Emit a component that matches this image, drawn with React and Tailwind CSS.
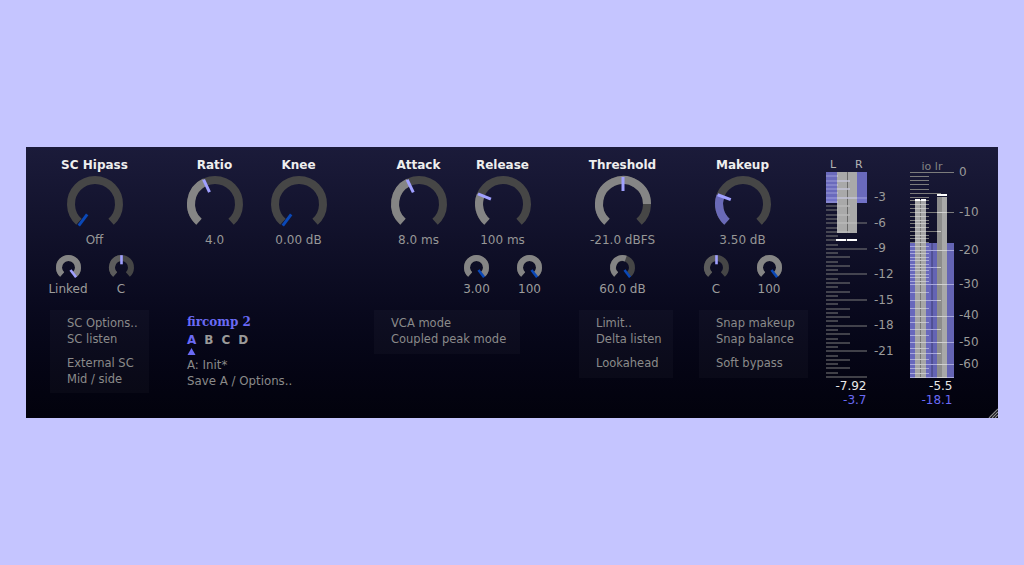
const BLUE = "#0a48b8";
const LAV = "#a0a0ff";

function polar(cx, cy, r, deg) {
  const a = ((deg - 90) * Math.PI) / 180;
  return [cx + r * Math.cos(a), cy + r * Math.sin(a)];
}
function arc(cx, cy, r, a0, a1) {
  const [x0, y0] = polar(cx, cy, r, a0);
  const [x1, y1] = polar(cx, cy, r, a1);
  return `M${x0} ${y0}A${r} ${r} 0 ${a1 - a0 > 180 ? 1 : 0} 1 ${x1} ${y1}`;
}

function Knob({ size = 56, tickAt = -143, tick = LAV, fills = [], track = "#464646" }) {
  const big = size > 40;
  const c = size / 2;
  const sw = big ? 8 : 6;
  const r = c - sw / 2;
  const [x0, y0] = polar(c, c, big ? 27 : 12.3, tickAt);
  const [x1, y1] = polar(c, c, big ? 13 : 3.2, tickAt);
  return (
    <svg width={size} height={size} viewBox={`0 0 ${size} ${size}`} className="block overflow-visible">
      <path d={arc(c, c, r, -138, 138)} fill="none" stroke={track} strokeWidth={sw} />
      {fills.map(([a, b, col], i) => (
        <path key={i} d={arc(c, c, r, a, b)} fill="none" stroke={col} strokeWidth={sw} />
      ))}
      <path d={`M${x0} ${y0}L${x1} ${y1}`} stroke={tick} strokeWidth={big ? 3 : 2.6} />
    </svg>
  );
}

function BigKnob({ label, value, ...k }) {
  return (
    <div className="w-[84px] shrink-0 flex flex-col items-center">
      <div className="h-[20px] leading-[20px] text-[12px] font-bold text-[#eeeeee] whitespace-nowrap">{label}</div>
      <div className="mt-[1px]"><Knob {...k} /></div>
      <div className="h-[17px] leading-[17px] text-[12px] text-[#979797] whitespace-nowrap">{value}</div>
    </div>
  );
}

function SmallKnob({ text, ...k }) {
  return (
    <div className="w-[53px] shrink-0 flex flex-col items-center">
      <Knob size={25} {...k} />
      <div className="mt-[1px] h-[16px] leading-[16px] text-[12px] text-[#9c9c9c] whitespace-nowrap">{text}</div>
    </div>
  );
}

function Menu({ groups, className = "" }) {
  return (
    <div className={`bg-[#ffffff07] pt-[5px] pl-[17px] flex flex-col gap-[8px] text-[11.5px] leading-[16px] text-[#8a8a8a] ${className}`}>
      {groups.map((g, i) => (
        <div key={i}>
          {g.map((t) => (
            <div key={t} className="whitespace-nowrap">{t}</div>
          ))}
        </div>
      ))}
    </div>
  );
}

function LeftMeter() {
  const ticks = [];
  for (let i = 1; i <= 48; i++) {
    ticks.push({ y: Math.round(i * 4.27) - 0.5, len: i % 6 === 0 ? 41 : i % 2 === 0 ? 24 : 12 });
  }
  return (
    <svg width="42" height="206" viewBox="0 0 42 206" className="block">
      <rect x="0" y="0" width="11" height="31" fill="#6a6abc" />
      <rect x="31" y="0" width="10" height="31" fill="#6a6abc" />
      <rect x="0" y="25" width="11" height="6" fill="#7272c8" />
      <rect x="31" y="25" width="10" height="6" fill="#7272c8" />
      <rect x="11" y="0" width="20" height="61" fill="#a9a9a9" />
      <rect x="21" y="0" width="1" height="61" fill="#696969" />
      {ticks.map((t, i) => (
        <g key={i}>
          <rect x="0" y={t.y} width={t.len} height="1" fill={t.y < 31 ? "#9c9cd8" : "#7c7c7c"} />
          {t.y < 61 && t.len > 11 && <rect x="11" y={t.y} width={Math.min(t.len - 11, 20)} height="1" fill="#d8d8d8" />}
        </g>
      ))}
      <rect x="10" y="67" width="10" height="2" fill="#ffffff" />
      <rect x="21" y="67" width="10" height="2" fill="#ffffff" />
    </svg>
  );
}

function dbY(db) {
  const pts = [[0, 0], [-5, 20.7], [-10, 40], [-15, 59], [-20, 77.5], [-25, 95], [-30, 112], [-40, 143.6], [-50, 170], [-60, 192], [-67.5, 205]];
  for (let i = 0; i < pts.length - 1; i++) {
    const [a, ya] = pts[i];
    const [b, yb] = pts[i + 1];
    if (db <= a && db >= b) return ya + ((a - db) / (a - b)) * (yb - ya);
  }
  return 205;
}

function RightMeter() {
  const ticks = [];
  for (let d = 0; d >= -67.5; d -= d > -30 ? 1 : 2.5) {
    const isLong = (d % 10 === 0 && d >= -60) || d === -67.5;
    const len = isLong ? 44 : d % 5 === 0 && d > -60 ? 31 : 19;
    ticks.push({ y: Math.round(dbY(d)), len });
  }
  return (
    <svg width="45" height="206" viewBox="0 0 45 206" className="block">
      <rect x="0" y="71" width="22" height="135" fill="#6868bc" />
      <rect x="22" y="71" width="22" height="135" fill="#6464b4" />
      <rect x="21.5" y="71" width="1" height="135" fill="#3a3a70" />
      <rect x="5" y="28" width="11" height="178" fill="#a6a6a6" />
      <rect x="10" y="28" width="1" height="178" fill="#787878" />
      <rect x="27" y="25" width="10" height="181" fill="#a8a8a8" />
      <rect x="27" y="25" width="5" height="181" fill="#8c8c8c" />
      {ticks.map((t, i) => (
        <g key={i}>
          <rect x="0" y={t.y} width={t.len} height="1" fill={t.y >= 71 ? "#a8a8dc" : "#7c7c7c"} />
          {t.y >= 27 && <rect x="5" y={t.y} width={Math.min(t.len - 5, 11)} height="1" fill="#c8c8c8" />}
          {t.y >= 25 && t.len > 27 && <rect x="27" y={t.y} width={Math.min(t.len - 27, 10)} height="1" fill="#d0d0d0" />}
        </g>
      ))}
      <rect x="5" y="27" width="5" height="2" fill="#ffffff" />
      <rect x="11" y="27" width="5" height="2" fill="#ffffff" />
      <rect x="27" y="22" width="10" height="2" fill="#ffffff" />
    </svg>
  );
}

function ScaleLabel({ y, x, children }) {
  return (
    <span className="absolute h-[16px] leading-[16px] text-[12px] text-[#9a9a9a] whitespace-nowrap" style={{ left: x, top: y - 8 }}>
      {children}
    </span>
  );
}

const FILL = "#858585";

export default function App() {
  return (
    <div className="w-full h-[565px] bg-[#c5c5ff] flex items-center justify-center overflow-hidden font-['DejaVu_Sans',sans-serif]">
      <div className="relative w-[972px] h-[271px] bg-gradient-to-b from-[#1b1b3a] to-[#02020c] flex pt-[8px] pl-[26.5px]">
        {/* SC */}
        <div className="w-[84px] shrink-0 flex flex-col items-center">
          <BigKnob label="SC Hipass" value="Off" tick={BLUE} />
          <div className="flex mt-[6px]">
            <SmallKnob text="Linked" tickAt={142} fills={[[-138, 138, FILL]]} />
            <SmallKnob text="C" tickAt={0} fills={[[-138, 0, "#5c5c5c"]]} />
          </div>
          <Menu className="self-start -ml-[2.5px] w-[99px] h-[83px] mt-[13px]" groups={[["SC Options..", "SC listen"], ["External SC", "Mid / side"]]} />
        </div>

        {/* Ratio / Knee + preset block */}
        <div className="ml-[36px] w-[168px] shrink-0 flex flex-col">
          <div className="flex">
            <BigKnob label="Ratio" value="4.0" tickAt={-25} fills={[[-138, -25, FILL]]} />
            <BigKnob label="Knee" value="0.00 dB" tick={BLUE} />
          </div>
          <div className="pl-[14.5px] mt-[65px] text-[11.8px] leading-[16px] text-[#8a8a8a]">
            <div className="font-['DejaVu_Serif',serif] font-bold text-[#6a6af5] text-[12px] leading-[16px] whitespace-nowrap">fircomp 2</div>
            <div className="flex gap-[8px] mt-[2px] text-[12px] font-bold text-[#9a9a9a]">
              <span className="text-[#6a6af5]">A</span>
              <span>B</span>
              <span>C</span>
              <span>D</span>
            </div>
            <svg width="9" height="7" viewBox="0 0 9 7" className="block">
              <path d="M4.5 0L8.5 7H0.5Z" fill="#6a6af5" />
            </svg>
            <div className="mt-[2px]">A: Init*</div>
            <div className="whitespace-nowrap">Save A / Options..</div>
          </div>
        </div>

        {/* Attack / Release */}
        <div className="ml-[36px] w-[168px] shrink-0 flex flex-col">
          <div className="flex">
            <BigKnob label="Attack" value="8.0 ms" tickAt={-26} fills={[[-138, -26, FILL]]} />
            <BigKnob label="Release" value="100 ms" tickAt={-68} fills={[[-138, -68, FILL]]} />
          </div>
          <div className="flex mt-[6px] pl-[73.5px]">
            <SmallKnob text="3.00" tickAt={142} tick={BLUE} fills={[[-138, 138, FILL]]} />
            <SmallKnob text="100" tickAt={142} tick={BLUE} fills={[[-138, 138, FILL]]} />
          </div>
          <Menu className="-ml-[2.5px] w-[146px] h-[44px] mt-[13px]" groups={[["VCA mode", "Coupled peak mode"]]} />
        </div>

        {/* Threshold */}
        <div className="ml-[36px] w-[84px] shrink-0 flex flex-col items-center">
          <BigKnob label="Threshold" value="-21.0 dBFS" tickAt={0} fills={[[-138, 90, FILL]]} />
          <div className="mt-[6px]">
            <SmallKnob text="60.0 dB" tickAt={142} tick={BLUE} fills={[[-138, 20, FILL]]} />
          </div>
          <Menu className="self-start -ml-[1.5px] w-[94px] h-[68px] mt-[13px]" groups={[["Limit..", "Delta listen"], ["Lookahead"]]} />
        </div>

        {/* Makeup */}
        <div className="ml-[36px] w-[84px] shrink-0 flex flex-col items-center">
          <BigKnob label="Makeup" value="3.50 dB" tickAt={-70} fills={[[-138, -70, "#6a6ab8"]]} />
          <div className="flex mt-[6px]">
            <SmallKnob text="C" tickAt={0} fills={[[-138, 0, "#5c5c5c"]]} />
            <SmallKnob text="100" tickAt={142} tick={BLUE} fills={[[-138, 138, FILL]]} />
          </div>
          <Menu className="self-start -ml-[1.5px] w-[109px] h-[68px] mt-[13px]" groups={[["Snap makeup", "Snap balance"], ["Soft bypass"]]} />
        </div>

        {/* Output meter */}
        <div className="ml-[41.5px] w-[84px] shrink-0 flex flex-col">
          <div className="relative h-[17px] text-[11px] leading-[20px] text-[#b4b4b4]">
            <span className="absolute left-[4px] top-0">L</span>
            <span className="absolute left-[29px] top-0">R</span>
          </div>
          <div className="relative">
            <LeftMeter />
            <ScaleLabel x={48} y={25}>-3</ScaleLabel>
            <ScaleLabel x={48} y={51}>-6</ScaleLabel>
            <ScaleLabel x={48} y={76}>-9</ScaleLabel>
            <ScaleLabel x={48} y={102}>-12</ScaleLabel>
            <ScaleLabel x={48} y={128}>-15</ScaleLabel>
            <ScaleLabel x={48} y={153}>-18</ScaleLabel>
            <ScaleLabel x={48} y={179}>-21</ScaleLabel>
          </div>
          <div className="w-[40.5px] mt-[1px] text-[12px] leading-[14px] text-right whitespace-nowrap">
            <div className="text-[#e8e8e8]">-7.92</div>
            <div className="text-[#6a6af5]">-3.7</div>
          </div>
        </div>

        {/* IO meter */}
        <div className="w-[76px] shrink-0 flex flex-col">
          <div className="h-[17px] w-[44px] text-center text-[11px] leading-[23px] text-[#848484] whitespace-nowrap">io lr</div>
          <div className="relative">
            <RightMeter />
            <ScaleLabel x={49} y={0}>0</ScaleLabel>
            <ScaleLabel x={49} y={40}>-10</ScaleLabel>
            <ScaleLabel x={49} y={78}>-20</ScaleLabel>
            <ScaleLabel x={49} y={112}>-30</ScaleLabel>
            <ScaleLabel x={49} y={143}>-40</ScaleLabel>
            <ScaleLabel x={49} y={170}>-50</ScaleLabel>
            <ScaleLabel x={49} y={192}>-60</ScaleLabel>
          </div>
          <div className="w-[42.5px] mt-[1px] text-[12px] leading-[14px] text-right whitespace-nowrap">
            <div className="text-[#e8e8e8]">-5.5</div>
            <div className="text-[#6a6af5]">-18.1</div>
          </div>
        </div>

        {/* Resize handle */}
        <svg width="10" height="10" viewBox="0 0 10 10" className="absolute right-0 bottom-0">
          <path d="M1 10L10 1M4 10L10 4M7 10L10 7" stroke="#8c8c8c" strokeWidth="1.2" fill="none" />
        </svg>
      </div>
    </div>
  );
}
